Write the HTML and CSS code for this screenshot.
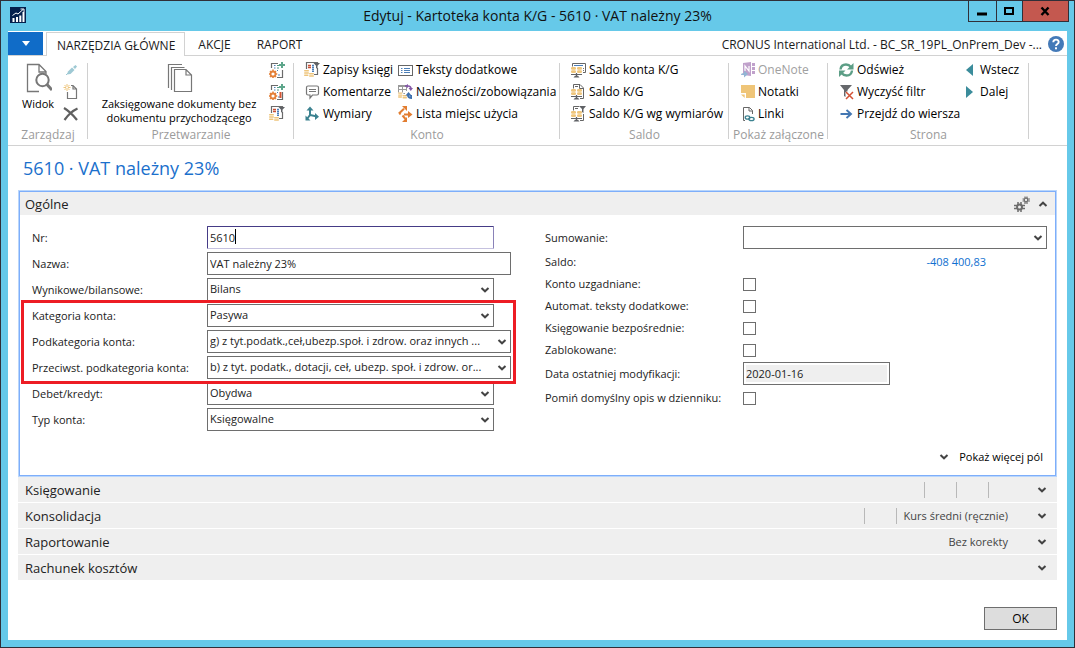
FILE: index.html
```html
<!DOCTYPE html>
<html lang="pl">
<head>
<meta charset="utf-8">
<title>Edytuj - Kartoteka konta K/G - 5610 · VAT należny 23%</title>
<link rel="stylesheet" href="styles.css">
</head>
<body>
<svg class="sprite" aria-hidden="true">
  <symbol id="chev-down" viewBox="0 0 10 6"><path d="M1.5 1 5 4.300 8.500 1" fill="none" stroke="currentColor" stroke-width="2"/></symbol>
  <symbol id="chev-up" viewBox="0 0 10 6"><path d="M1.500 5 5 1.700 8.500 5" fill="none" stroke="currentColor" stroke-width="2"/></symbol>
  <symbol id="coins" viewBox="0 0 10 8">
    <path d="M0 0h6v2h4v6H0Z" fill="#fff"/>
    <g fill="#eec57c"><rect x="0" y="0" width="5" height="1.500" rx=".7"/><rect x="0" y="2.200" width="5" height="1.500" rx=".7"/><rect x="5" y="3" width="5" height="1.500" rx=".7"/><rect x="0" y="4.400" width="4.500" height="1.500" rx=".7"/><rect x="5" y="5.200" width="5" height="1.500" rx=".7"/></g>
  </symbol>
  <symbol id="doc-gear" viewBox="0 0 16 16">
    <path d="M2.500 6V1.500H9M13.500 8v7.500H8" fill="none" stroke="#6b6b6b" stroke-width="1.200"/>
    <path d="M5 3.500h1.500M5 6h1.500M8 8.500h1M9 13h2" stroke="#4c7fb8" stroke-width="1"/>
    <path d="M8 3.500h2M8 6h2" stroke="#4f9a82"/>
    <path d="M13 0v6M10 3h6" stroke="#5da68b" stroke-width="2"/>
    <circle cx="4" cy="12" r="2.500" fill="none" stroke="#e4813a" stroke-width="1.800"/>
    <path d="M4 7.500v2M4 14.500v2M0 12h1.500M6.500 12h1.800M1 9l1.300 1.300M5.700 13.700 7 15M7 9 5.700 10.300M1 15l1.300-1.300" stroke="#e4813a" stroke-width="1.500"/>
  </symbol>
  <symbol id="ledger" viewBox="0 0 16 16">
    <path d="M2.500 7V.5h11V2M13.500 6v6.500H9" fill="none" stroke="#6b6b6b" stroke-width="1.200"/>
    <path d="M4 3.500h3M4 5.500h3" stroke="#c94f35" stroke-width="1.300"/><path d="M8 3.500h2M8 5.500h2M8 7.500h2M8 9.500h2" stroke="#4c7fb8" stroke-width="1.300"/>
    <path d="M9.500 1H16L13.500 3.700V7L12 6V3.700Z" fill="#5f6165"/>
    <use href="#coins" x="0" y="8" width="10" height="8"/>
  </symbol>
  <symbol id="balance" viewBox="0 0 16 16">
    <path d="M0 4.500h12.500V13H0Z" fill="#fff"/>
    <g fill="#eec57c"><rect x="1" y="5" width="5" height="2.700" rx="1.300"/><rect x="1" y="8.300" width="5" height="2.700" rx="1.300"/><rect x="7" y="5" width="5" height="2.700" rx="1.300"/><rect x="7" y="8.300" width="5" height="2.700" rx="1.300"/></g>
    <path d="M1 12.500h11M6.500 11v4" stroke="#606266" stroke-width="1.200"/><path d="M3.500 15.500 5 13.800h3l1.500 1.700Z" fill="#606266"/>
  </symbol>
</svg>

<div class="window">
  <header class="titlebar">
    <svg class="app-logo" viewBox="0 0 16 16" aria-hidden="true"><rect width="16" height="16" fill="#04204d"/><path d="M3.500 11v4M7 10v5M10.300 8.500V15M13.500 5v10" stroke="#fff" stroke-width="2"/><path d="M2.500 8.500 6 6l2 1 5-4.500M10.500 2H14v3" fill="none" stroke="#fff" stroke-width="1"/></svg>
    <h1 class="window-title">Edytuj - Kartoteka konta K/G - 5610 · VAT należny 23%</h1>
    <div class="window-controls">
      <button class="wc wc-min" aria-label="Minimalizuj"><svg viewBox="0 0 10 10"><path d="M0 8h10" stroke="#000" stroke-width="3"/></svg></button>
      <button class="wc wc-max" aria-label="Maksymalizuj"><svg viewBox="0 0 10 10"><rect x="1" y="2" width="8" height="6" fill="none" stroke="#000" stroke-width="2"/></svg></button>
      <button class="wc wc-close" aria-label="Zamknij"><svg viewBox="0 0 10 10"><path d="M1.500 1.500 8.500 9M8.500 1.500 1.500 9" stroke="#000" stroke-width="2.400"/></svg></button>
    </div>
  </header>

  <main class="client">
    <nav class="tabs">
      <button class="file-tab" aria-label="Menu"><svg viewBox="0 0 8 5"><path d="M0 0h8L4 5Z" fill="#fff"/></svg></button>
      <button class="tab tab-active">NARZĘDZIA GŁÓWNE</button>
      <button class="tab">AKCJE</button>
      <button class="tab">RAPORT</button>
      <span class="company">CRONUS International Ltd. - BC_SR_19PL_OnPrem_Dev -...</span>
      <button class="help" aria-label="Pomoc"><svg viewBox="0 0 16 16"><circle cx="8" cy="8" r="8" fill="#447ab8"/><path d="M5.300 6.300C5.300 2.700 10.800 2.800 10.700 6c0 2-2.700 2-2.700 4" fill="none" stroke="#fff" stroke-width="1.900"/><rect x="7" y="11.300" width="2" height="2" fill="#fff"/></svg></button>
    </nav>

    <div class="ribbon">
      <section class="group">
        <div class="group-body manage">
          <button class="big"><svg class="big-icon" viewBox="0 0 28 30"><path d="M15 28.500H3.500v-27H15L22 8.500V11M15 1.500V9h7" fill="none" stroke="#777" stroke-width="1.300"/><circle cx="18.500" cy="17" r="6.200" fill="#fff" stroke="#777" stroke-width="2"/><path d="m23 21.500 5 5.500" stroke="#777" stroke-width="3"/></svg><span>Widok</span></button>
          <div class="stack">
            <button class="item" aria-label="Edytuj"><svg class="icon" viewBox="0 0 16 16"><path d="m4 12.500 1-3 4-4 2.500 2.500-4 4Z" fill="#9ec9d4"/><path d="m10 5 2.500-2 1.500 1.500-2 2.500Z" fill="#9ec9d4"/><path d="m3 13 2-2" stroke="#9ec9d4"/></svg></button>
            <button class="item" aria-label="Nowy"><svg class="icon" viewBox="0 0 16 16"><path d="M4.500 8v6.500h9V5l-3.500-3.500H8M10 1.500V5h3.500" fill="none" stroke="#777" stroke-width="1.200"/><path d="M4 0v7M.5 3.500h7M1.500 1l5 5M6.500 1l-5 5" stroke="#eec57c" stroke-width="1"/><circle cx="4" cy="3.500" r="1" fill="#fff"/></svg></button>
            <button class="item" aria-label="Usuń"><svg class="icon" viewBox="0 0 16 16"><path d="M1 2c5 3 9 7 13 12M14.500 2.500C9 5 5 9 1.500 14" fill="none" stroke="#606060" stroke-width="2.200"/></svg></button>
          </div>
        </div>
        <h2 class="group-name">Zarządzaj</h2>
      </section>

      <section class="group">
        <div class="group-body process">
          <button class="big"><svg class="big-icon" viewBox="0 0 28 30"><path d="M3.500 25V1.500H17M6.500 27V4.500h13M9.500 28.500v-22H21l5.500 5.500v16.500ZM21 6.500V12h5.500" fill="none" stroke="#777" stroke-width="1.200"/></svg><span>Zaksięgowane dokumenty bez dokumentu przychodzącego</span></button>
          <div class="stack">
            <button class="item" aria-label="Przetwórz dokument"><svg class="icon" viewBox="0 0 16 16"><use href="#doc-gear"/></svg></button>
            <button class="item" aria-label="Przetwórz raport"><svg class="icon" viewBox="0 0 16 16"><use href="#doc-gear"/><path d="M11.500 8v6" stroke="#d65532" stroke-width="2"/></svg></button>
            <button class="item" aria-label="Filtruj zapisy"><svg class="icon" viewBox="0 0 16 16"><use href="#ledger"/></svg></button>
          </div>
        </div>
        <h2 class="group-name">Przetwarzanie</h2>
      </section>

      <section class="group">
        <div class="group-body account">
          <div class="stack">
            <button class="item"><svg class="icon" viewBox="0 0 16 16"><use href="#ledger"/></svg>Zapisy księgi</button>
            <button class="item"><svg class="icon" viewBox="0 0 16 16"><path d="M4 2h9q1.500 0 1.500 1.500v6q0 1.500-1.500 1.500H8.500L6 14v-3H4Q2.500 11 2.500 9.500v-6Q2.500 2 4 2Z" fill="none" stroke="#777" stroke-width="1.200"/><path d="M5 5.500h7M5 7.500h7" stroke="#777"/></svg>Komentarze</button>
            <button class="item"><svg class="icon" viewBox="0 0 16 16"><path d="M6 2v7l7 1.500M6 9l-3 4" fill="none" stroke="#3c8290" stroke-width="2"/><path d="M2.500 4.500 6 .5l3.500 4ZM11 7l4 3.700L11 14ZM1.500 9.500v5h5Z" fill="#3c8290"/></svg>Wymiary</button>
          </div>
          <div class="stack">
            <button class="item"><svg class="icon" viewBox="0 0 16 16"><rect x="1.500" y="3.500" width="14" height="10" fill="#fff" stroke="#666"/><path d="M4 6.500h1.500M4 8.500h1.500M4 10.500h1.500M7 6.500h6M7 8.500h6M7 10.500h6" stroke="#4c7fb8"/></svg>Teksty dodatkowe</button>
            <button class="item"><svg class="icon" viewBox="0 0 16 16"><path d="M1 1.500h9M1 5.500h9M1 9.500h7M1.500 1v9M5.500 1v9M9.500 1v6" stroke="#999" fill="none"/><path d="M1 1h9v2H1Z" fill="#999"/><use href="#coins" x="1" y="8" width="9" height="8"/><path d="M8 2h3q3 0 3 3" fill="none" stroke="#8559a8" stroke-width="1.700"/><path d="M11.500 4H16l-2.200 3ZM11 0v4L8 2Z" fill="#8559a8"/><path d="M15 14q-4 0-4-3" fill="none" stroke="#3e70ae" stroke-width="2"/><path d="M8.500 11.500 11.500 8l3 3.500ZM12 11h3v4Z" fill="#3e70ae"/></svg>Należności/zobowiązania</button>
            <button class="item"><svg class="icon" viewBox="0 0 16 16"><path d="M3.500 8.500 2.500 7 7 2.800M5.500 9.500 8.500 13M7 8.500h6" fill="none" stroke="#e27d30" stroke-width="2"/><path d="M5 0h5v5ZM11 5l4.500 3.500L11 12ZM10 11v5H5Z" fill="#e27d30"/></svg>Lista miejsc użycia</button>
          </div>
        </div>
        <h2 class="group-name">Konto</h2>
      </section>

      <section class="group">
        <div class="group-body">
          <div class="stack">
            <button class="item"><svg class="icon" viewBox="0 0 16 16"><use href="#balance"/><path d="M2.500 4.500v-3h13v9H13" fill="none" stroke="#666"/><path d="M4 3.500h9" stroke="#4c7fb8"/><path d="M13 6.500h1M13 8.500h1" stroke="#777"/></svg>Saldo konta K/G</button>
            <button class="item"><svg class="icon" viewBox="0 0 16 16"><use href="#balance"/><path d="M3.500 4.500V.5H10L13.500 4v10.500H10M9.500.5V4.500h4M5 2.500h3" fill="none" stroke="#666"/></svg>Saldo K/G</button>
            <button class="item"><svg class="icon" viewBox="0 0 16 16"><use href="#balance"/><path d="M3.500 4.500V.5H9M13.500 8v6.500H10M5 2.500h3" fill="none" stroke="#666"/><path d="M9 0h7l-2.500 3v4L12 6V3Z" fill="#5f6165"/></svg>Saldo K/G wg wymiarów</button>
          </div>
        </div>
        <h2 class="group-name">Saldo</h2>
      </section>

      <section class="group">
        <div class="group-body">
          <div class="stack">
            <button class="item" disabled><svg class="icon" viewBox="0 0 16 16"><path d="m4 1 8-1v14l-8-1Z" fill="#c0a1cb"/><path d="M6 9V4l4 5V4" fill="none" stroke="#fff" stroke-width="1.200"/><path d="M13 1h3v3h-3ZM13 5h3v3h-3ZM13 9h3v3h-3Z" fill="#c0a1cb"/><path d="M2 13q0-2 3-2V8.500l4 3.500-4 3.500V13Z" fill="#93b5d4"/></svg>OneNote</button>
            <button class="item"><svg class="icon" viewBox="0 0 16 16"><path d="M2 1h14v13H7V9H2Z" fill="#efc578"/><path d="M2 10.500h3.700V14Z" fill="#efc578"/></svg>Notatki</button>
            <button class="item"><svg class="icon" viewBox="0 0 16 16"><path d="M6 14.500H4.500v-13h6l3 3V8M10 1.500V5h3.500" fill="none" stroke="#666"/><g fill="none" stroke="#3c8290" stroke-width="1.300"><ellipse cx="8.500" cy="11.500" rx="2.300" ry="1.700"/><ellipse cx="12.500" cy="13" rx="2.600" ry="1.700"/></g></svg>Linki</button>
          </div>
        </div>
        <h2 class="group-name">Pokaż załączone</h2>
      </section>

      <section class="group">
        <div class="group-body page-group">
          <div class="stack">
            <button class="item"><svg class="icon" viewBox="0 0 16 16"><path d="M2.500 7.500q.5-5 5.500-5 3 0 5 2.500M14 8.500q-.5 5-5.500 5-3 0-5-2.500" fill="none" stroke="#5c9e86" stroke-width="2.400"/><path d="M15.500 1v6.500H9ZM1 15V8.500h6.500Z" fill="#5c9e86"/></svg>Odśwież</button>
            <button class="item"><svg class="icon" viewBox="0 0 16 16"><path d="M2 1h12L9.500 6v3L7.500 10V13L6 12V6Z" fill="#66686c"/><path d="m8 8 7 7M15 8l-7 7" stroke="#fff" stroke-width="3"/><path d="m8 8 7 7M15 8l-7 7" stroke="#d35235" stroke-width="1.500"/></svg>Wyczyść filtr</button>
            <button class="item"><svg class="icon" viewBox="0 0 16 16"><path d="M2.500 8h10M8.500 4l4.500 4-4.500 4" fill="none" stroke="#4377b3" stroke-width="1.900"/></svg>Przejdź do wiersza</button>
          </div>
          <div class="stack">
            <button class="item"><svg class="icon" viewBox="0 0 16 16"><path d="M12 2v12L5 8Z" fill="#3b8c9b"/></svg>Wstecz</button>
            <button class="item"><svg class="icon" viewBox="0 0 16 16"><path d="M5 2v12l7-6Z" fill="#3b8c9b"/></svg>Dalej</button>
          </div>
        </div>
        <h2 class="group-name">Strona</h2>
      </section>
    </div>

    <div class="page">
      <h2 class="page-title">5610 · VAT należny 23%</h2>

      <section class="fasttab">
        <header class="fasttab-head">
          <h3>Ogólne</h3>
          <button class="plain" aria-label="Dostosuj"><svg class="gears" viewBox="0 0 16 16"><g fill="none" stroke="#6c6c6c"><circle cx="5.500" cy="11" r="2.500" stroke-width="2"/><path d="M4 6v3M7 6v3M4 13v3M7 13v3M0 9.500h3M0 12.500h3M8 9.500h3M8 12.500h3" stroke-width="1.500"/><circle cx="12" cy="4" r="1.800" stroke-width="1.300"/><path d="M11 .5V2M13 .5V2M11 6v2M13 6v2M8.500 3H10M8.500 5H10M14 3h2M14 5h2" stroke-width="1.200"/></g></svg></button>
          <button class="plain" aria-label="Zwiń"><svg class="chev"><use href="#chev-up"/></svg></button>
        </header>

        <form class="fields">
          <div class="col col-left">
            <div class="row"><label for="no">Nr:</label><div class="control short"><input class="box focused" id="no" type="text" value="5610"><i class="caret"></i></div></div>
            <div class="row"><label for="name">Nazwa:</label><div class="control"><input class="box" id="name" type="text" value="VAT należny 23%"></div></div>
            <div class="row"><label for="income">Wynikowe/bilansowe:</label><div class="control short"><select class="box" id="income"><option>Bilans</option></select><svg class="chev"><use href="#chev-down"/></svg></div></div>
            <div class="marked">
              <div class="row"><label for="cat">Kategoria konta:</label><div class="control short"><select class="box" id="cat"><option>Pasywa</option></select><svg class="chev"><use href="#chev-down"/></svg></div></div>
              <div class="row"><label for="subcat">Podkategoria konta:</label><div class="control"><select class="box" id="subcat"><option>g) z tyt.podatk.,ceł,ubezp.społ. i zdrow. oraz innych ...</option></select><svg class="chev"><use href="#chev-down"/></svg></div></div>
              <div class="row"><label for="oppcat">Przeciwst. podkategoria konta:</label><div class="control"><select class="box" id="oppcat"><option>b) z tyt. podatk., dotacji, ceł, ubezp. społ. i zdrow. or...</option></select><svg class="chev"><use href="#chev-down"/></svg></div></div>
            </div>
            <div class="row"><label for="debit">Debet/kredyt:</label><div class="control short"><select class="box" id="debit"><option>Obydwa</option></select><svg class="chev"><use href="#chev-down"/></svg></div></div>
            <div class="row"><label for="type">Typ konta:</label><div class="control short"><select class="box" id="type"><option>Księgowalne</option></select><svg class="chev"><use href="#chev-down"/></svg></div></div>
          </div>

          <div class="col col-right">
            <div class="row"><label for="sum">Sumowanie:</label><div class="control"><select class="box" id="sum"><option></option></select><svg class="chev"><use href="#chev-down"/></svg></div></div>
            <div class="row low"><span>Saldo:</span><a class="amount" href="#saldo">-408 400,83</a></div>
            <div class="row low"><label for="recon">Konto uzgadniane:</label><input class="check" id="recon" type="checkbox"></div>
            <div class="row low"><label for="auto">Automat. teksty dodatkowe:</label><input class="check" id="auto" type="checkbox"></div>
            <div class="row low"><label for="direct">Księgowanie bezpośrednie:</label><input class="check" id="direct" type="checkbox"></div>
            <div class="row low"><label for="blocked">Zablokowane:</label><input class="check" id="blocked" type="checkbox"></div>
            <div class="row dated"><label for="modified">Data ostatniej modyfikacji:</label><div class="control"><input class="box readonly" id="modified" type="text" value="2020-01-16" readonly></div></div>
            <div class="row low"><label for="omit">Pomiń domyślny opis w dzienniku:</label><input class="check" id="omit" type="checkbox"></div>
          </div>
        </form>

        <footer class="more"><button class="plain more-button"><svg class="chev"><use href="#chev-down"/></svg>Pokaż więcej pól</button></footer>
      </section>

      <section class="collapsed"><h3>Księgowanie</h3><div class="facts"><span></span><span></span><span></span><span></span></div><button class="plain" aria-label="Rozwiń"><svg class="chev"><use href="#chev-down"/></svg></button></section>
      <section class="collapsed"><h3>Konsolidacja</h3><div class="facts"><span></span><span></span><span>Kurs średni (ręcznie)</span></div><button class="plain" aria-label="Rozwiń"><svg class="chev"><use href="#chev-down"/></svg></button></section>
      <section class="collapsed"><h3>Raportowanie</h3><div class="facts"><span>Bez korekty</span></div><button class="plain" aria-label="Rozwiń"><svg class="chev"><use href="#chev-down"/></svg></button></section>
      <section class="collapsed"><h3>Rachunek kosztów</h3><button class="plain" aria-label="Rozwiń"><svg class="chev"><use href="#chev-down"/></svg></button></section>

      <div class="actions"><button class="ok">OK</button></div>
    </div>
  </main>
</div>
</body>
</html>
```

FILE: styles.css
```css
* { box-sizing: border-box; }

body {
  margin: 0;
  font-family: "Open Sans", "Noto Sans", sans-serif;
  font-size: 12px;
  line-height: 16px;
  color: #222;
}

h1, h2, h3 { margin: 0; font-weight: 400; }
button, input, select { font: inherit; color: inherit; }
button { margin: 0; padding: 0; border: 0; background: none; }
svg { display: block; flex: none; }
.sprite { position: absolute; width: 0; height: 0; }

.window {
  display: flex;
  flex-direction: column;
  min-height: 100vh;
  padding: 0 7px 7px;
  border: 1px solid #302f38;
  background: #66c9e9;
}

/* Title bar */
.titlebar {
  display: grid;
  grid-template-columns: 99px 1fr 99px;
  height: 30px;
}
.app-logo { width: 16px; height: 16px; margin: 6px 0 0 2px; }
.window-title {
  font-size: 14px;
  line-height: 30px;
  text-align: center;
  white-space: nowrap;
  color: #111;
}
.window-controls { display: flex; height: 21px; margin-right: -2px; }
.wc {
  display: grid;
  place-items: center;
  border: 1px solid #302f38;
  border-top: 0;
}
.wc svg { width: 10px; height: 10px; }
.wc-min { flex: 28; }
.wc-max { flex: 26; border-left: 0; }
.wc-close { flex: 47; border-left: 0; background: #c4584f; }

.client {
  display: flex;
  flex: 1;
  flex-direction: column;
  background: #fff;
}

/* Ribbon tabs */
.tabs {
  display: flex;
  align-items: stretch;
  height: 25px;
  padding-top: 1px;
  border-bottom: 1px solid #d2d2d2;
  color: #1b1b1b;
}
.file-tab {
  display: grid;
  place-items: center;
  width: 35px;
  margin-right: 3px;
  background: #106cc8;
}
.file-tab svg { width: 8px; height: 5px; }
.tab { padding: 3px 13px 0; }
.tab-active {
  margin-bottom: -1px;
  padding: 3px 9px 1px 10px;
  border: 1px solid #d2d2d2;
  border-bottom: 0;
  background: #fff;
}
.company { margin-left: auto; padding-top: 5px; white-space: nowrap; }
.help { width: 16px; margin: 0 3px 0 6px; }
.help svg { width: 16px; height: 16px; }

/* Ribbon groups */
.ribbon {
  display: grid;
  grid-template-columns: 80px 206px 266px 169px 99px 201px;
  height: 90px;
  padding-top: 3px;
  border-bottom: 1px solid #d2d2d2;
  color: #000;
}
.group {
  background: linear-gradient(#d0d0d0, #d0d0d0) right 4px / 1px 76px no-repeat;
}
.group-body { display: grid; height: 66px; padding-left: 10px; }
.account { grid-template-columns: 93px 1fr; }
.page-group { grid-template-columns: 123px 1fr; }
.manage { grid-template-columns: 50px 16px; padding-left: 5px; }
.process { grid-template-columns: 172px 16px; padding-left: 5px; gap: 4px; }
.group-name {
  font-size: 12px;
  line-height: 19px;
  text-align: center;
  white-space: nowrap;
  color: #9b9b9b;
}
.stack { display: grid; grid-auto-rows: 22px; }
.item {
  display: flex;
  align-items: center;
  gap: 3px;
  white-space: nowrap;
}
.item:disabled { color: #a0a0a0; }
.icon { width: 16px; height: 16px; }
.big {
  display: flex;
  flex-direction: column;
  align-items: center;
  gap: 4px;
  padding-top: 4px;
  font-size: 11px;
  line-height: 14px;
}
.big-icon { width: 28px; height: 30px; }

/* Page body */
.page {
  display: flex;
  flex: 1;
  flex-direction: column;
  padding: 10px 10px;
}
.page-title {
  margin-bottom: 9px;
  padding-left: 5px;
  font-size: 18px;
  line-height: 25px;
  color: #1b70cc;
}
.fasttab {
  border: 1px solid #7eaefa;
  outline: 1px solid #b9d6fc;
  margin: 1px;
}
.fasttab-head, .collapsed {
  display: flex;
  align-items: center;
  background: #efefef;
}
.fasttab-head { height: 23px; padding: 0 7px 0 5px; }
h3 { margin-right: auto; font-size: 13px; line-height: 22px; }
.plain { display: block; }
.gears { width: 16px; height: 16px; margin-right: 8px; }
.chev { width: 10px; height: 6px; color: #444; }

.fields {
  display: grid;
  grid-template-columns: 513fr 502fr;
  padding: 11px 8px 0 12px;
  font-size: 11px;
}
.col-left { display: grid; align-content: start; gap: 3px; padding-right: 34px; }
.row {
  display: grid;
  grid-template-columns: 175px 1fr;
  align-items: center;
  height: 23px;
  white-space: nowrap;
}
.col-right { padding-bottom: 34px; }
.col-right .row { grid-template-columns: 198px 1fr; margin-bottom: 2px; }
.col-right .low { height: 22px; margin-bottom: 0; }
.col-right .dated { margin-top: 1px; }
.control { position: relative; }
.short { margin-right: 17px; }
.box {
  display: block;
  width: 100%;
  height: 23px;
  margin: 0;
  padding: 0 2px 1px;
  border: 1px solid #6e6e6e;
  border-radius: 0;
  outline: 0;
  appearance: none;
  background: #fff;
}
.focused { border-color: #453b86 #8a82b8 #c5c1df #453b86; border-radius: 1px; }
.caret {
  position: absolute;
  top: 3px;
  left: 28px;
  width: 1px;
  height: 15px;
  background: #000;
}
.control .chev { position: absolute; top: 9px; right: 4px; pointer-events: none; }
.readonly {
  width: 147px;
  background: #efefef;
  box-shadow: inset 0 0 0 2px #fff;
}
.check {
  width: 13px;
  height: 13px;
  margin: 0;
  border: 1px solid #6e6e6e;
  appearance: none;
  background: #fff;
}
.amount {
  margin-right: 61px;
  text-align: right;
  text-decoration: none;
  color: #0f6fd0;
}
.marked { position: relative; z-index: 1; display: grid; gap: 3px; }
.marked::after {
  content: "";
  position: absolute;
  inset: -4px -5px -5px -11px;
  border: 3px solid #ed1c24;
  pointer-events: none;
}
.more { display: flex; justify-content: flex-end; padding: 6px 12px 10px; }
.more-button { display: flex; align-items: center; gap: 10px; font-size: 11px; color: #000; }

.collapsed { height: 25px; margin-bottom: 1px; padding: 0 10px 0 7px; }
.facts { display: flex; margin-right: 17px; font-size: 11px; color: #444; }
.facts span { min-width: 32px; height: 16px; padding: 0 12px 0 7px; }
.facts span + span { border-left: 1px solid #b8b8b8; }

.actions { display: flex; justify-content: flex-end; margin-top: auto; }
.ok {
  width: 73px;
  height: 23px;
  border: 1px solid #6e6e6e;
  background: #ddd;
  color: #000;
}
```
